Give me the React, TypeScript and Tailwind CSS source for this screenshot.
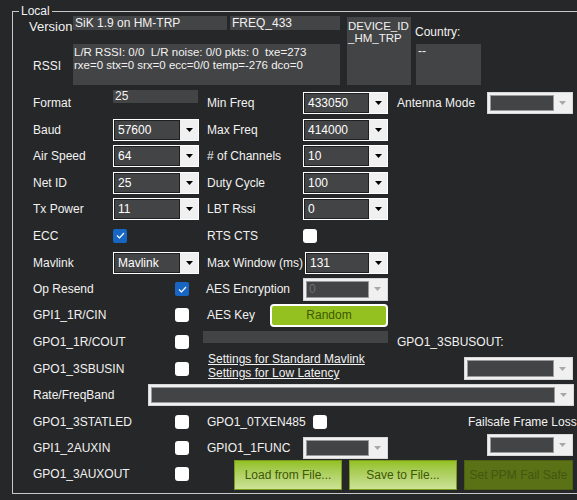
import React from "react";

const Tri = ({ color = "#000" }: { color?: string }) => (
  <svg width="7" height="4" viewBox="0 0 7 4">
    <path d="M0 0 H7 L3.5 4 Z" fill={color} />
  </svg>
);

const Combo = ({ value = "", w = "w-[86px]", h = "h-[22px]" }: { value?: string; w?: string; h?: string }) => (
  <div className={`${w} ${h} flex border border-white bg-[#f0f0f0] shrink-0`}>
    <div className="flex-1 bg-[#434445] border border-[#1e1f20] text-white text-[12px] leading-[18px] pl-[3px] overflow-hidden whitespace-nowrap">
      {value}
    </div>
    <div className="w-[18px] flex items-center justify-center">
      <Tri />
    </div>
  </div>
);

const DCombo = ({ value = "", w = "w-[86px]", h = "h-[22px]" }: { value?: string; w?: string; h?: string }) => (
  <div className={`${w} ${h} flex border border-[#d8d8d8] bg-[#f0f0f0] p-[2px] shrink-0`}>
    <div className="flex-1 bg-[#434445] border border-[#9a9a9a] text-[#6e6e6e] text-[12px] leading-[14px] pl-[2px] overflow-hidden whitespace-nowrap">
      {value}
    </div>
    <div className="w-[16px] flex items-center justify-center">
      <Tri color="#a8a8a8" />
    </div>
  </div>
);

const Check = ({ on = false }: { on?: boolean }) =>
  on ? (
    <div className="w-[14px] h-[14px] rounded-[2px] bg-[#1766c4] flex items-center justify-center shrink-0">
      <svg width="9" height="7" viewBox="0 0 9 7">
        <path d="M1 3.5 L3.5 6 L8 1" stroke="#fff" strokeWidth="1.2" fill="none" />
      </svg>
    </div>
  ) : (
    <div className="w-[14px] h-[14px] rounded-[3px] bg-white shrink-0" />
  );

const L1 = ({ t }: { t: string }) => <div className="w-[80px] shrink-0 whitespace-nowrap">{t}</div>;
const L2 = ({ t }: { t?: string }) => <div className="w-[96px] shrink-0 whitespace-nowrap">{t}</div>;
const Row = ({ h, children }: { h: string; children: React.ReactNode }) => (
  <div className={`flex items-center ${h}`}>{children}</div>
);

export default function App() {
  return (
    <div
      className="w-[577px] h-[500px] overflow-hidden bg-[#262728] text-[#f2f2f2] text-[12px] pt-[11px]"
      style={{ fontFamily: '"Liberation Sans", Arial, sans-serif' }}
    >
      <div className="relative ml-[12px] w-[600px] h-[483px] border-l border-t border-b border-[#c8c8c8]">
        <span className="absolute -top-[8px] left-[6px] px-[2px] bg-[#262728] leading-[14px]">Local</span>

        {/* top block */}
        <div className="flex pt-[4px] h-[77px]">
          <div className="w-[60px] shrink-0">
            <div className="pl-[16px] text-[13px] leading-[15px] mt-[3px]">Version</div>
            <div className="pl-[20px] leading-[14px] mt-[25px]">RSSI</div>
          </div>
          <div className="w-[267px] shrink-0">
            <div className="flex gap-[3px]">
              <div className="w-[154px] h-[14px] bg-[#434445] leading-[14px] pl-[2px] whitespace-nowrap">SiK 1.9 on HM-TRP</div>
              <div className="w-[110px] h-[14px] bg-[#434445] leading-[14px] pl-[2px] whitespace-nowrap">FREQ_433</div>
            </div>
            <div className="mt-[14px] h-[41px] bg-[#434445] pl-[1px] pt-[2px] text-[11.5px] leading-[13px] whitespace-nowrap overflow-hidden">
              <div>L/R RSSI: 0/0&nbsp; L/R noise: 0/0 pkts: 0&nbsp; txe=273</div>
              <div>rxe=0 stx=0 srx=0 ecc=0/0 temp=-276 dco=0</div>
            </div>
          </div>
          <div className="ml-[7px] mt-[1px] w-[64px] h-[68px] bg-[#434445] text-[11.5px] leading-[12px] pl-[1px] pt-[3px] shrink-0">
            <div>DEVICE_ID</div>
            <div>_HM_TRP</div>
          </div>
          <div className="ml-[4px] w-[66px] shrink-0">
            <div className="mt-[9px] leading-[14px]">Country:</div>
            <div className="mt-[5px] ml-[1px] h-[41px] bg-[#434445] pl-[2px] leading-[14px]">--</div>
          </div>
        </div>

        {/* form rows */}
        <div className="pl-[20px]">
          <Row h="h-[27px]">
            <L1 t="Format" />
            <div className="w-[86px] self-start mt-[1px]">
              <div className="w-[85px] h-[13px] bg-[#434445] leading-[13px] pl-[2px]">25</div>
            </div>
            <div className="w-[8px]" />
            <L2 t="Min Freq" />
            <Combo value="433050" w="w-[85px]" />
            <div className="w-[9px]" />
            <div className="w-[90px] shrink-0 whitespace-nowrap">Antenna Mode</div>
            <DCombo />
          </Row>
          <Row h="h-[27px]">
            <L1 t="Baud" />
            <Combo value="57600" />
            <div className="w-[8px]" />
            <L2 t="Max Freq" />
            <Combo value="414000" w="w-[85px]" />
          </Row>
          <Row h="h-[26px]">
            <L1 t="Air Speed" />
            <Combo value="64" />
            <div className="w-[8px]" />
            <L2 t="# of Channels" />
            <Combo value="10" w="w-[85px]" />
          </Row>
          <Row h="h-[27px]">
            <L1 t="Net ID" />
            <Combo value="25" />
            <div className="w-[8px]" />
            <L2 t="Duty Cycle" />
            <Combo value="100" w="w-[85px]" />
          </Row>
          <Row h="h-[26px]">
            <L1 t="Tx Power" />
            <Combo value="11" />
            <div className="w-[8px]" />
            <L2 t="LBT Rssi" />
            <Combo value="0" w="w-[85px]" />
          </Row>
          <Row h="h-[27px]">
            <L1 t="ECC" />
            <div className="w-[86px]">
              <Check on />
            </div>
            <div className="w-[8px]" />
            <L2 t="RTS CTS" />
            <Check />
          </Row>
          <Row h="h-[27px]">
            <L1 t="Mavlink" />
            <Combo value="Mavlink" />
            <div className="w-[8px]" />
            <div className="w-[98px] shrink-0 whitespace-nowrap">Max Window (ms)</div>
            <Combo value="131" w="w-[83px]" />
          </Row>
          <Row h="h-[26px]">
            <L1 t="Op Resend" />
            <div className="w-[86px] pl-[62px]">
              <Check on />
            </div>
            <div className="w-[7px]" />
            <div className="w-[97px] shrink-0 whitespace-nowrap">AES Encryption</div>
            <DCombo value="0" w="w-[85px]" h="h-[23px]" />
          </Row>
          <Row h="h-[26px]">
            <L1 t="GPI1_1R/CIN" />
            <div className="w-[86px] pl-[62px]">
              <Check />
            </div>
            <div className="w-[8px]" />
            <div className="w-[63px] shrink-0">AES Key</div>
            <div className="w-[118px] h-[23px] rounded-[4px] border-2 border-white bg-[#94c11f] text-[#405704] flex items-center justify-center shrink-0">
              Random
            </div>
          </Row>
          <Row h="h-[27px]">
            <L1 t="GPO1_1R/COUT" />
            <div className="w-[86px] pl-[62px]">
              <Check />
            </div>
            <div className="w-[4px]" />
            <div className="w-[185px] h-[12px] bg-[#434445] self-start mt-[3px] shrink-0" />
            <div className="w-[9px]" />
            <div className="whitespace-nowrap">GPO1_3SBUSOUT:</div>
          </Row>
          <Row h="h-[27px]">
            <L1 t="GPO1_3SBUSIN" />
            <div className="w-[86px] pl-[62px]">
              <Check />
            </div>
            <div className="w-[9px]" />
            <div className="w-[256px] shrink-0 flex flex-col self-start -mt-[3px]">
              <div className="underline leading-[14px] whitespace-nowrap">Settings for Standard Mavlink</div>
              <div className="underline leading-[14px] whitespace-nowrap">Settings for Low Latency</div>
            </div>
            <DCombo w="w-[109px]" h="h-[23px]" />
          </Row>
          <Row h="h-[26px]">
            <div className="w-[115px] shrink-0">Rate/FreqBand</div>
            <DCombo w="w-[426px]" h="h-[22px]" />
          </Row>
          <Row h="h-[27px]">
            <L1 t="GPO1_3STATLED" />
            <div className="w-[86px] pl-[62px]">
              <Check />
            </div>
            <div className="w-[8px]" />
            <div className="w-[106px] shrink-0 whitespace-nowrap">GPO1_0TXEN485</div>
            <Check />
            <div className="w-[141px]" />
            <div className="whitespace-nowrap">Failsafe Frame Loss</div>
          </Row>
          <Row h="h-[26px]">
            <L1 t="GPI1_2AUXIN" />
            <div className="w-[86px] pl-[62px]">
              <Check />
            </div>
            <div className="w-[8px]" />
            <L2 t="GPIO1_1FUNC" />
            <DCombo w="w-[85px]" h="h-[22px]" />
            <div className="w-[99px]" />
            <div className="self-start -mt-[1px]">
              <DCombo w="w-[86px]" h="h-[22px]" />
            </div>
          </Row>
          <Row h="h-[26px]">
            <L1 t="GPO1_3AUXOUT" />
            <div className="w-[86px] pl-[62px]">
              <Check />
            </div>
            <div className="w-[35px]" />
            <div className="flex gap-[7px] h-[30px] mt-[2px]">
              <div className="w-[108px] h-[30px] border border-[#7a9a1e] bg-linear-to-b from-[#94c11f] to-[#cde296] text-[#405704] flex items-center justify-center whitespace-nowrap">
                Load from File...
              </div>
              <div className="w-[108px] h-[30px] border border-[#7a9a1e] bg-linear-to-b from-[#94c11f] to-[#cde296] text-[#405704] flex items-center justify-center whitespace-nowrap">
                Save to File...
              </div>
              <div className="w-[109px] h-[30px] border border-[#4d5f12] bg-[#5a7116] text-[#435710] flex items-center justify-center whitespace-nowrap">
                Set PPM Fail Safe
              </div>
            </div>
          </Row>
        </div>
      </div>
    </div>
  );
}
